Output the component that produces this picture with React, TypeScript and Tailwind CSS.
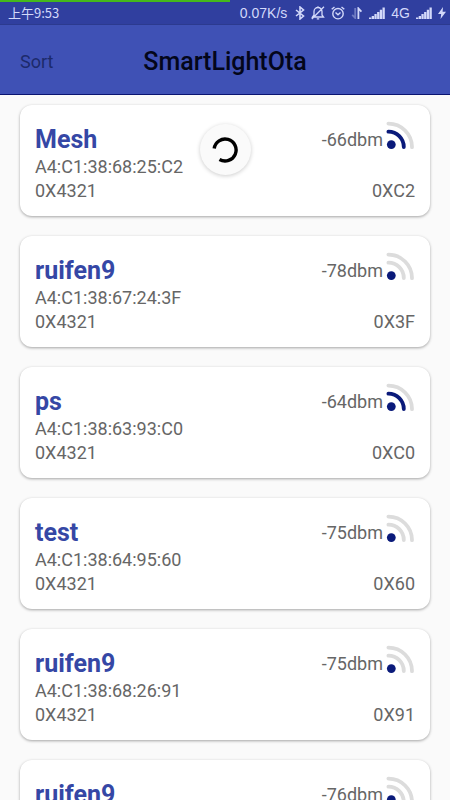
import { useState } from "react";

/* ---------------- TYPES ---------------- */

interface Device {
  name: string;
  mac: string;
  meshId: string;
  address: string;
  rssi: number;
}

/* ---------------- DATA ---------------- */

const DEVICES: Device[] = [
  { name: "Mesh", mac: "A4:C1:38:68:25:C2", meshId: "0X4321", address: "0XC2", rssi: -66 },
  { name: "ruifen9", mac: "A4:C1:38:67:24:3F", meshId: "0X4321", address: "0X3F", rssi: -78 },
  { name: "ps", mac: "A4:C1:38:63:93:C0", meshId: "0X4321", address: "0XC0", rssi: -64 },
  { name: "test", mac: "A4:C1:38:64:95:60", meshId: "0X4321", address: "0X60", rssi: -75 },
  { name: "ruifen9", mac: "A4:C1:38:68:26:91", meshId: "0X4321", address: "0X91", rssi: -75 },
  { name: "ruifen9", mac: "", meshId: "", address: "", rssi: -76 },
];

/* ---------------- ICONS ---------------- */

function CellSignal() {
  return (
    <svg viewBox="0 0 16 12" className="h-3 w-4" fill="currentColor" aria-hidden="true">
      <path d="M0 10.5h2.3V12H0zM2.7 9H5v3H2.7zM5.4 7h2.3v5H5.4zM8.1 5h2.3v7H8.1zM10.8 2.8h2.3V12h-2.3zM13.5 .5h2.3V12h-2.3z" />
    </svg>
  );
}

function StatusIcons() {
  return (
    <>
      <svg viewBox="0 0 10 14" className="ml-2 h-3.5 w-2.5" fill="none" stroke="currentColor" strokeWidth="1.6" aria-hidden="true">
        <path d="M1 4l7.5 6L5 13V1l3.5 3L1 10" />
      </svg>
      <svg viewBox="0 0 14 14" className="ml-1.5 h-3.5 w-3.5" fill="none" stroke="currentColor" strokeWidth="1.3" aria-hidden="true">
        <path d="M1.5 11h11L11 9V5.5a4 4 0 0 0-8 0V9zM5.8 12.8h2.4M7 .3v1.2M.8 13L13 .8" />
      </svg>
      <svg viewBox="0 0 14 14" className="ml-1.5 h-3.5 w-3.5" fill="none" stroke="currentColor" strokeWidth="1.4" aria-hidden="true">
        <circle cx="7" cy="7.7" r="5.2" />
        <path d="M4.5 6.5L7 8.8l2.5-2.3M.7 3.3L3.5 1M13.3 3.3L10.5 1" />
      </svg>
      <svg viewBox="0 0 12 12" className="ml-1.5 h-3 w-3" fill="none" stroke="currentColor" strokeWidth="1.8" aria-hidden="true">
        <path d="M4.2 1v10L1.2 7.8" opacity="0.4" />
        <path d="M7.4 12V1.4l3 3.2" />
      </svg>
    </>
  );
}

function RssiIcon({ rssi }: { rssi: number }) {
  const near = rssi > -70;

  return (
    <svg viewBox="0 0 30 30" className="h-[30px] w-[30px]" fill="none" strokeWidth="3.8" strokeLinecap="round" aria-hidden="true">
      <path d="M3.4 2.6a23.6 23.6 0 0 1 23.6 23.6" stroke="#dcdcdc" />
      <path d="M3.4 10.7a15.4 15.4 0 0 1 15.4 15.4" stroke={near ? "#0a1a7a" : "#dcdcdc"} />
      <circle cx="6.3" cy="23.6" r="4.4" fill="#0a1a7a" />
    </svg>
  );
}

/* ---------------- COMPONENTS ---------------- */

function StatusBar() {
  return (
    <div className="relative flex h-[25px] shrink-0 items-center justify-between border-b border-[#2c3a8f] bg-[#303f9f] pt-0.5 pr-1 pl-2 text-[#d3d9fa]">
      <div className="absolute top-0 left-0 h-0.5 w-[51%] bg-[#45b81c]" />
      <span className="font-['Noto_Sans_CJK_SC',sans-serif] text-[13px] leading-5">上午9:53</span>
      <div className="flex items-center font-['Liberation_Sans',sans-serif] text-[14px]">
        <span>0.07K/s</span>
        <StatusIcons />
        <span className="ml-1.5">
          <CellSignal />
        </span>
        <span className="mx-1.5">4G</span>
        <CellSignal />
        <svg viewBox="0 0 8 12" className="ml-1.5 h-3 w-2" fill="currentColor" aria-hidden="true">
          <path d="M5 0L0 7h3.2L2.5 12 8 4.8H4.6z" />
        </svg>
      </div>
    </div>
  );
}

function DeviceCard({ device }: { device: Device }) {
  return (
    <li className="flex h-[111px] shrink-0 flex-col rounded-xl bg-white px-[15px] pt-4 text-lg leading-6 text-[#666666] shadow-[0_1px_3px_rgba(0,0,0,0.35)]">
      <div className="flex h-[34px] items-start justify-between">
        <h2 className="text-[25px] leading-[37px] font-bold text-[#3547a5]">{device.name}</h2>
        <div className="flex items-start gap-0.5">
          <span className="leading-[38px]">{device.rssi}dbm</span>
          <RssiIcon rssi={device.rssi} />
        </div>
      </div>
      <p>{device.mac}</p>
      <div className="flex justify-between">
        <span>{device.meshId}</span>
        <span>{device.address}</span>
      </div>
    </li>
  );
}

export default function App() {
  const [sorted, setSorted] = useState(false);

  const devices = sorted
    ? [...DEVICES].sort((a, b) => b.rssi - a.rssi)
    : DEVICES;

  return (
    <div className="flex h-screen flex-col bg-[#fafafa] font-['Roboto',sans-serif]">
      <StatusBar />

      <header className="grid h-[70px] shrink-0 grid-cols-[1fr_auto_1fr] items-center border-b border-[#0a1470] bg-[#3f51b5] px-5 pt-1">
        <button
          type="button"
          onClick={() => setSorted(!sorted)}
          className="justify-self-start text-lg text-[#1c2a6b]"
        >
          Sort
        </button>
        <h1 className="text-[25px] font-medium text-[#03061a]">SmartLightOta</h1>
      </header>

      <main className="relative min-h-0 flex-1">
        <ul className="flex h-full flex-col gap-5 overflow-y-auto px-5 py-2.5 [scrollbar-width:none]">
          {devices.map((device, index) => (
            <DeviceCard key={index} device={device} />
          ))}
        </ul>

        {/* refresh spinner floats over the list */}
        <div
          role="status"
          aria-label="Refreshing"
          className="absolute inset-x-0 top-[29px] mx-auto flex h-[51px] w-[51px] items-center justify-center rounded-full bg-[#fafafa] shadow-[0_1px_4px_rgba(0,0,0,0.2)]"
        >
          <svg viewBox="0 0 26 26" className="h-[26px] w-[26px]" fill="none" stroke="#000000" strokeWidth="3.4" aria-hidden="true">
            <path d="M2.2 11.5A11 11 0 1 1 7.5 22.5" />
          </svg>
        </div>
      </main>
    </div>
  );
}
